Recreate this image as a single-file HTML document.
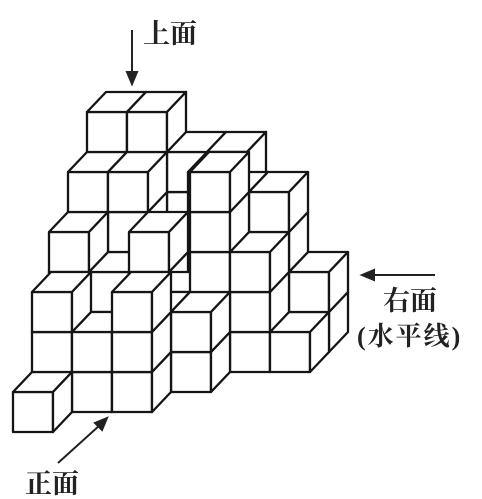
<!DOCTYPE html>
<html><head><meta charset="utf-8">
<style>
html,body{margin:0;padding:0;background:#fff;}
body{width:482px;height:499px;position:relative;overflow:hidden;}
svg{position:absolute;left:0;top:0;}
.t{position:absolute;font-family:"Liberation Serif","Noto Serif CJK SC",serif;font-weight:bold;color:#222;white-space:nowrap;line-height:1;}
</style></head>
<body>
<svg id="s" width="482" height="499" viewBox="0 0 482 499" xmlns="http://www.w3.org/2000/svg">
<g id="cubes" fill="#fff" stroke="#151515" stroke-width="2.3" stroke-linejoin="round"></g>
<g stroke="#222" stroke-width="2" fill="#222">
<line x1="132" y1="30" x2="132" y2="74"/>
<polygon points="127,72 137,72 132,84"/>
<line x1="372" y1="275" x2="435" y2="275"/>
<polygon points="362,275 374,270 374,280"/>
<line x1="58" y1="463" x2="100" y2="425"/>
<polygon points="107,418 95,423 102,430"/>
</g>
</svg>
<div class="t" style="left:143px;top:21px;font-size:27px;">上面</div>
<div class="t" style="left:383px;top:288px;font-size:27px;">右面</div>
<div class="t" style="left:357px;top:324px;font-size:26px;letter-spacing:2px;">(水平线)</div>
<div class="t" style="left:25px;top:471px;font-size:27px;">正面</div>
<script>
var H={
"-1,-1":1,
"-1,0":3,"0,0":2,"1,0":3,
"-1,1":1,"0,1":1,"1,1":2,"2,1":2,
"-1,2":1,"0,2":1,"1,2":2,"2,2":5,"3,2":3,"4,2":1,
"-2,3":3,"-1,3":2,"0,3":3,"1,3":1,"2,3":4,"3,3":4,"4,3":2,
"-2,4":4,"-1,4":4,"1,4":4,
"-2,5":5,"-1,5":5,"0,5":4,"1,5":4
};
var cubes=[];
for(var key in H){var p=key.split(",");var i=+p[0],j=+p[1];for(var k=0;k<H[key];k++)cubes.push([i,j,k]);}
cubes.sort(function(a,b){var sa=a[0]-a[1]+a[2],sb=b[0]-b[1]+b[2];if(sa!==sb)return sa-sb;return (a[2]-b[2])||(b[1]-a[1])||(a[0]-b[0]);});
var g=document.getElementById("cubes");var out="";
function pts(a){return a.map(function(q){return q[0]+","+q[1];}).join(" ");}
cubes.forEach(function(c){
var X=72+40*c[0]+19*c[1],B=412-40*c[2]-20*c[1];
out+='<polygon points="'+pts([[X,B],[X+40,B],[X+40,B-40],[X,B-40]])+'"/>';
out+='<polygon points="'+pts([[X,B-40],[X+40,B-40],[X+59,B-60],[X+19,B-60]])+'"/>';
out+='<polygon points="'+pts([[X+40,B],[X+40,B-40],[X+59,B-60],[X+59,B-20]])+'"/>';
});
g.innerHTML=out;
</script>
</body></html>
